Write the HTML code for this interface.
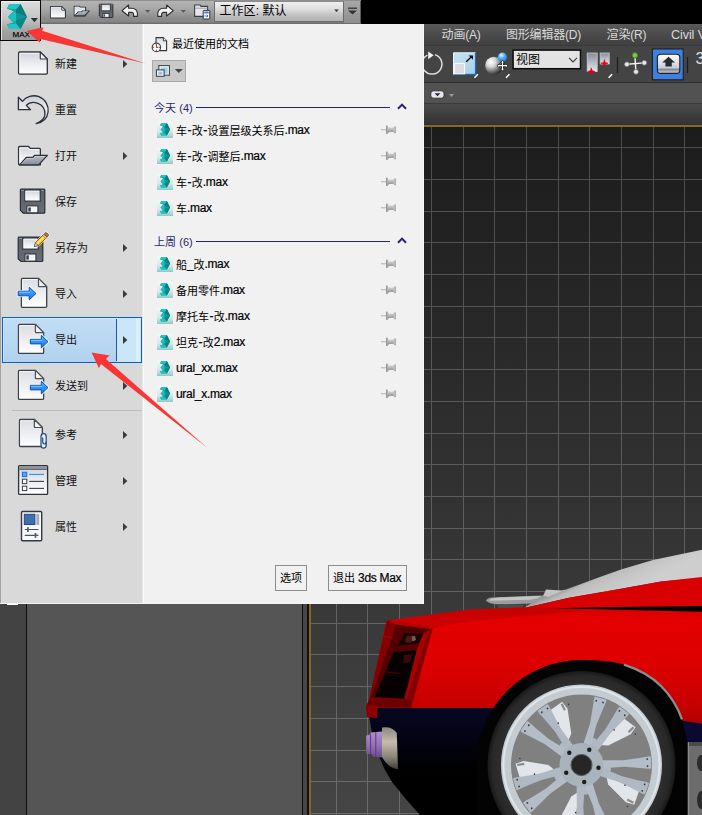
<!DOCTYPE html>
<html lang="zh"><head><meta charset="utf-8"><title>3ds Max</title>
<style>
html,body{margin:0;padding:0}
html{overflow:hidden;width:702px;height:815px;background:#555}
body{width:702px;height:815px;overflow:hidden;position:relative;background:#555;
 font-family:"Liberation Sans","Noto Sans CJK SC",sans-serif;font-size:11px;color:#000}
div,svg{box-sizing:border-box}
.a{position:absolute}
.t{position:absolute;white-space:nowrap}
.l{font-size:12px;letter-spacing:-0.3px;position:relative;top:-0.8px;-webkit-text-stroke:.2px currentColor}
.h{margin:0 .55px}
#root{position:absolute;left:0;top:0;width:702px;height:815px;overflow:hidden}

</style></head><body>
<svg width="0" height="0" style="position:absolute"><defs>
<linearGradient id="gpage" x1="0" y1="0" x2="0" y2="1"><stop offset="0" stop-color="#cfd3db"/><stop offset=".55" stop-color="#eceef1"/><stop offset="1" stop-color="#ffffff"/></linearGradient>
<linearGradient id="gpage2" x1="0" y1="0" x2="0" y2="1"><stop offset="0" stop-color="#d9dce2"/><stop offset=".6" stop-color="#f0f1f4"/><stop offset="1" stop-color="#ffffff"/></linearGradient>
<linearGradient id="gblue" x1="0" y1="0" x2="0" y2="1"><stop offset="0" stop-color="#58b4ff"/><stop offset=".5" stop-color="#2f94fb"/><stop offset="1" stop-color="#1672e6"/></linearGradient>
<linearGradient id="gflap" x1="0" y1="0" x2="0" y2="1"><stop offset="0" stop-color="#b9bec6"/><stop offset="1" stop-color="#868e97"/></linearGradient>
<linearGradient id="gfl" x1="0" y1="0" x2="0" y2="1"><stop offset="0" stop-color="#5a5f68"/><stop offset="1" stop-color="#676c75"/></linearGradient>
<linearGradient id="garrow" x1="0" y1="0" x2="0" y2="1"><stop offset="0" stop-color="#c9cdd6"/><stop offset=".5" stop-color="#eef0f3"/><stop offset="1" stop-color="#d4d8df"/></linearGradient>
<linearGradient id="gmaxbg" x1="0" y1="0" x2="0" y2="1"><stop offset="0" stop-color="#f4f8f8"/><stop offset=".6" stop-color="#d6e8e8"/><stop offset="1" stop-color="#8ecaca"/></linearGradient>
<linearGradient id="gpin" x1="0" y1="0" x2="0" y2="1"><stop offset="0" stop-color="#e6e6e6"/><stop offset=".5" stop-color="#b4b4b4"/><stop offset="1" stop-color="#8e8e8e"/></linearGradient>
<g id="logo3">
 <path d="M9.2 4H20.55L26.9 16.75L20.55 28.9H9.2L7 24.5L13.2 22.7L8 16.75L13.6 11L7 8.4Z" fill="#0e8f8f"/>
 <path d="M20.55 4L26.9 16.75L16 12.6V9.6Z" fill="#0a7c7e"/>
 <path d="M16 12.6L26.9 16.75L16 20.9Z" fill="#0f9696"/>
 <path d="M16 20.9L26.9 16.75L20.55 28.9L16 23.3Z" fill="#0b8587"/>
 <path d="M9.2 4H20.55L16 9.6L7 8.4Z" fill="#22c6c4"/>
 <path d="M7 8.4L16 9.6V12.6L13.6 11Z" fill="#13a5a5"/>
 <path d="M8 16.75L13.6 11L16 12.6V20.9L13.2 22.7Z" fill="#1cc0be"/>
 <path d="M13.2 22.7L16 20.9V23.3L7 24.5Z" fill="#13a5a5"/>
 <path d="M7 24.5L16 23.3L20.55 28.9H9.2Z" fill="#20c4c2"/>
</g>
<g id="maxfile">
 <rect x="0" y="0" width="16" height="16" fill="url(#gmaxbg)"/>
 <use href="#logo3" transform="translate(-.4 -.9) scale(.5)"/>
</g>
<g id="pin">
 <path d="M0 4.8H5.5" stroke="#b0b0b0" stroke-width="1"/>
 <rect x="5" y=".6" width="1.8" height="8.4" rx=".6" fill="#9a9a9a"/>
 <path d="M6.8 1.4L8.3 2.6H12.8V7H8.3L6.8 8.2Z" fill="url(#gpin)"/>
 <rect x="12.8" y="1.4" width="2.2" height="6.9" rx=".6" fill="#a2a2a2"/>
 <rect x="13.4" y="2" width=".9" height="5.7" fill="#d0d0d0"/>
</g>
</defs></svg>
<div id="root">
<div class="a" style="left:0;top:0;width:702px;height:24px;background:#000"></div>
<div class="a" style="left:0;top:0;width:361px;height:24px;background:linear-gradient(#6a6a6a 0,#b4b4b4 1px,#a6a6a6 40%,#8c8c8c 75%,#868686 22px,#6e6e6e 23px)"></div>
<div class="a" style="left:0;top:24px;width:702px;height:21px;background:linear-gradient(#5a5a5a,#484848 60%,#404040)"></div>
<div class="t" aria-label="&#21160;&#30011;(A)" style="left:441.6px;top:28.0px;height:14px;line-height:14px;font-size:12px;color:#dadada;letter-spacing:-.2px">动画(A)</div>
<div class="t" aria-label="&#22270;&#24418;&#32534;&#36753;&#22120;(D)" style="left:506px;top:28.0px;height:14px;line-height:14px;font-size:12px;color:#dadada;letter-spacing:-.2px">图形编辑器(D)</div>
<div class="t" aria-label="&#28210;&#26579;(R)" style="left:606.6px;top:28.0px;height:14px;line-height:14px;font-size:12px;color:#dadada;letter-spacing:-.2px">渲染(R)</div>
<div class="t" aria-label="Civil View" style="left:671px;top:28.0px;height:14px;line-height:14px;font-size:12.6px;color:#dadada;letter-spacing:-.1px">Civil View</div>
<div class="a" style="left:0;top:45px;width:702px;height:38px;background:#444;border-top:1px solid #3a3a3a"></div>
<div class="a" style="left:0;top:82px;width:702px;height:1px;background:#2e2e2e"></div>
<div class="a" style="left:0;top:83px;width:702px;height:21px;background:#525252"></div>
<div class="a" style="left:0;top:103px;width:702px;height:1px;background:#3a3a3a"></div>
<div class="a" style="left:0;top:104px;width:702px;height:21px;background:linear-gradient(#4b4b4b,#3c3c3c 60%,#323232)"></div>
<div class="a" style="left:311px;top:127px;width:391px;height:688px;background:linear-gradient(#1c1c1c,#454545)"></div>
<svg class="a" style="left:0;top:0" width="702" height="815"><path d="M336.5 127V815M367.5 127V815M399.5 127V815M431.5 127V815M463.5 127V815M494.5 127V815M526.5 127V815M558.5 127V815M589.5 127V815M621.5 127V815M653.5 127V815M684.5 127V815M311 147.5H702M311 179.5H702M311 211.5H702M311 242.5H702M311 274.5H702M311 306.5H702M311 337.5H702M311 369.5H702M311 401.5H702M311 433.5H702M311 464.5H702M311 496.5H702M311 528.5H702M311 559.5H702M311 591.5H702M311 623.5H702M311 654.5H702M311 686.5H702M311 718.5H702M311 750.5H702M311 781.5H702M311 813.5H702" stroke="#fff" stroke-opacity=".21" stroke-width="1" fill="none" shape-rendering="crispEdges"/></svg>
<div class="a" style="left:309px;top:125px;width:393px;height:2px;background:#86691f"></div>
<div class="a" style="left:309px;top:125px;width:2px;height:690px;background:#86691f"></div>
<div class="a" style="left:0;top:125px;width:27px;height:690px;background:#434343"></div>
<div class="a" style="left:26px;top:125px;width:1px;height:690px;background:#0c0c0c"></div>
<div class="a" style="left:27px;top:125px;width:275px;height:690px;background:#555"></div>
<div class="a" style="left:302px;top:125px;width:1px;height:690px;background:#0c0c0c"></div>
<div class="a" style="left:303px;top:125px;width:4px;height:690px;background:#474747"></div>
<div class="a" style="left:307px;top:125px;width:2px;height:690px;background:#111"></div>
<div class="a" style="left:7px;top:603px;width:11px;height:2px;background:#fff"></div><svg class="a" style="left:0;top:0" width="702" height="110"><path d="M427.4 55.2A10 10 0 1 0 435 54.6" fill="none" stroke="#dcdcdc" stroke-width="1.5"/><path d="M428.2 51.6L433.6 55.2L428.2 59.2Z" fill="#f2f2f2"/><defs><linearGradient id="gsc" x1="0" y1="0" x2="1" y2="1"><stop offset="0" stop-color="#c6e4f2"/><stop offset="1" stop-color="#a4d0e8"/></linearGradient><radialGradient id="gsph" cx=".33" cy=".3" r=".75"><stop offset="0" stop-color="#fff"/><stop offset=".35" stop-color="#d8d8d8"/><stop offset=".75" stop-color="#6a6a6a"/><stop offset="1" stop-color="#2c2c2c"/></radialGradient><radialGradient id="gsb" cx=".4" cy=".3" r=".7"><stop offset="0" stop-color="#eaf6ff"/><stop offset=".45" stop-color="#56b4f8"/><stop offset="1" stop-color="#1a7be0"/></radialGradient><linearGradient id="gbar" x1="0" y1="0" x2="0" y2="1"><stop offset="0" stop-color="#878d98"/><stop offset="1" stop-color="#e6e9ee"/></linearGradient><linearGradient id="gkey" x1="0" y1="0" x2="0" y2="1"><stop offset="0" stop-color="#ffffff"/><stop offset="1" stop-color="#d4d8df"/></linearGradient><linearGradient id="gkey2" x1="0" y1="0" x2="0" y2="1"><stop offset="0" stop-color="#fff"/><stop offset=".72" stop-color="#c8ccd4"/><stop offset=".78" stop-color="#7e848e"/><stop offset="1" stop-color="#d4d8de"/></linearGradient></defs><rect x="453.5" y="52.8" width="22" height="21.6" fill="url(#gsc)"/><path d="M453.5 74.4V52.8H475.5" stroke="#eaf6fc" stroke-width="1" fill="none"/><path d="M454 74.4H475.5V53" stroke="#2468c0" stroke-width="1.2" fill="none"/><rect x="454.4" y="63.4" width="10.2" height="10.4" fill="#dcdde2" stroke="#fafafa" stroke-width="1"/><path d="M466.2 61.8L472.2 56.1" stroke="#111" stroke-width="1.4"/><path d="M468.6 55.4H473V59.8Z" fill="#111"/><path d="M474.4 77.8L477.9 74.3M506 77.8L509.5 74.3M608.6 77.8L612.1 74.3" stroke="#fff" stroke-width="1.5"/><circle cx="494" cy="65.6" r="8.9" fill="url(#gsph)"/><circle cx="502.4" cy="57.2" r="4.6" fill="url(#gsb)"/><path d="M502.5 61V70.4M497.8 65.7H507.2" stroke="#111" stroke-width="2.6"/><path d="M502.5 60.2L504.6 62.8H500.4ZM502.5 71.2L504.6 68.6H500.4ZM497 65.7L499.6 63.6V67.8ZM508 65.7L505.4 63.6V67.8Z" fill="#fff" stroke="#111" stroke-width=".7"/><path d="M502.5 61.4V70M498.2 65.7H506.8" stroke="#fff" stroke-width="1.2"/><rect x="513.1" y="50.1" width="67.4" height="18.6" fill="#e3e3e3" stroke="#0c0c0c" stroke-width="1.5"/><path d="M569 57.8L573 61.8L577 57.8" stroke="#3c3c3c" stroke-width="1.2" fill="none"/><rect x="587.2" y="53" width="10" height="18.6" fill="url(#gbar)" stroke="#c9ccd2" stroke-width=".8"/><rect x="600.2" y="53" width="9" height="11" fill="url(#gbar)" stroke="#c9ccd2" stroke-width=".8"/><path d="M591.3 67.80000000000001L592.0999999999999 70.60000000000001L594.9 71.4L592.0999999999999 72.2L591.3 75.0L590.5 72.2L587.6999999999999 71.4L590.5 70.60000000000001Z" fill="#e40012" stroke="#e40012" stroke-width=".6"/><path d="M604.4 59.6L605.1999999999999 62.400000000000006L608.0 63.2L605.1999999999999 64.0L604.4 66.8L603.6 64.0L600.8 63.2L603.6 62.400000000000006Z" fill="#e40012" stroke="#e40012" stroke-width=".6"/><path d="M617.5 57V73M687.5 57V73" stroke="#1c1c1c" stroke-width="1.2"/><path d="M627 64.2L644.2 62.9M634.9 55.4L635.9 71.8" stroke="#f2f2f2" stroke-width="1.4"/><circle cx="626.9" cy="64.3" r="2.4" fill="#e8e8ec" stroke="#7c7c84" stroke-width=".8"/><circle cx="644.3" cy="62.8" r="2.4" fill="#e8e8ec" stroke="#7c7c84" stroke-width=".8"/><circle cx="636" cy="71.8" r="2.4" fill="#e8e8ec" stroke="#7c7c84" stroke-width=".8"/><circle cx="634.9" cy="55.3" r="2.7" fill="#7cc84a" stroke="#3c7c24" stroke-width=".9"/><rect x="652.4" y="49" width="30.8" height="30.8" fill="#3e80e2" stroke="#1a1a1a" stroke-width="1"/><rect x="657.4" y="54.2" width="22.4" height="19.2" rx="3.2" fill="url(#gkey2)" stroke="#1c1f26" stroke-width="1.1"/><path d="M668.6 56.8L675 62.4H671.8V66.4H665.4V62.4H662.2Z" fill="#262a33"/><rect x="430.8" y="90.8" width="13.2" height="7.4" rx="2.6" fill="#e6e6ee" stroke="#2a2a2a" stroke-width=".9"/><path d="M434.6 93.2H440.4L437.5 96.2Z" fill="#22262e"/><path d="M449 94H454L451.5 96.9Z" fill="#9a9a9a"/></svg><div class="t" aria-label="&#35270;&#22270;" style="left:516px;top:53.2px;height:14px;line-height:14px;font-size:12px;color:#000;">视图</div>
<div class="t" style="left:695.4px;top:49.6px;font-size:16px;line-height:18px;color:#dcdcdc">3</div><svg class="a" style="left:0;top:0" width="702" height="815"><defs>
<clipPath id="vp"><rect x="311" y="127" width="391" height="688"/></clipPath>
<linearGradient id="gbody" gradientUnits="userSpaceOnUse" x1="0" y1="606" x2="0" y2="724"><stop offset="0" stop-color="#d60000"/><stop offset=".12" stop-color="#e40000"/><stop offset=".5" stop-color="#dc0000"/><stop offset=".85" stop-color="#c60000"/><stop offset="1" stop-color="#b40000"/></linearGradient>
<linearGradient id="grear" gradientUnits="userSpaceOnUse" x1="400" y1="0" x2="500" y2="0"><stop offset="0" stop-color="#000" stop-opacity=".22"/><stop offset="1" stop-color="#000" stop-opacity="0"/></linearGradient>
<linearGradient id="gnavy" gradientUnits="userSpaceOnUse" x1="0" y1="708" x2="0" y2="775"><stop offset="0" stop-color="#070724"/><stop offset=".5" stop-color="#030312"/><stop offset=".8" stop-color="#010106"/><stop offset="1" stop-color="#000"/></linearGradient>
<linearGradient id="ghood" gradientUnits="userSpaceOnUse" x1="600" y1="570" x2="612" y2="596"><stop offset="0" stop-color="#909090"/><stop offset=".25" stop-color="#bcbcbc"/><stop offset=".6" stop-color="#c6c6c6"/><stop offset="1" stop-color="#cecece"/></linearGradient>
<linearGradient id="gcone" gradientUnits="userSpaceOnUse" x1="0" y1="727" x2="0" y2="770"><stop offset="0" stop-color="#8c867c"/><stop offset=".35" stop-color="#c4bcae"/><stop offset=".7" stop-color="#8a847a"/><stop offset="1" stop-color="#3a3632"/></linearGradient>
<linearGradient id="gpurp" gradientUnits="userSpaceOnUse" x1="0" y1="732" x2="0" y2="758"><stop offset="0" stop-color="#ad8fcc"/><stop offset=".5" stop-color="#9672b4"/><stop offset="1" stop-color="#664a86"/></linearGradient>
<radialGradient id="gtire" gradientUnits="userSpaceOnUse" cx="581.5" cy="765" r="94"><stop offset=".85" stop-color="#2e2e2e"/><stop offset=".95" stop-color="#282828"/><stop offset="1" stop-color="#181818"/></radialGradient>
</defs><g clip-path="url(#vp)"><path d="M524 608L541 596L566 589.6L602 576.3L621 569.4L653 560L702 549.8V578L661 581.6L621 588.7L569 597.8Z" fill="url(#ghood)"/><path d="M543 596L546 589.4L562 590.4L566 589.6L548 597Z" fill="#c4c4c4"/><path d="M486 600.6Q487 597.8 492 597.4L541 595.6L548 597L530 603.6L500 604.6Q488 604 486 600.6Z" fill="#9c9c9c"/><path d="M489 600.8L530 599.8L538 598L541 596L500 597.6Q490 598.2 489 600.8Z" fill="#c6c6c6"/><path d="M497 604.2H524L521 609.6H499Z" fill="#4c4c4c"/><path d="M520 610L524 608L569 597.8L621 588.7L661 581.6L702 577V610Z" fill="#d80000"/><path d="M386.5 620.4L470 609.4L524 607.4L702 607V723.8L681 720.5L500 730L493 708.4H366L369.8 698.2Z" fill="url(#gbody)"/><path d="M470 609.4L524 607.4L600 608.4L560 612.4L470 621.5L431 628.2L386.5 620.4Z" fill="#b80000" fill-opacity=".55"/><path d="M552 608.2L600 607.3L702 606V611.8L650 610.4L600 609.3Z" fill="#050000"/><path d="M366 708L500 708V815H420L406.6 800L392 782L384.5 769L374 745L369.8 720Z" fill="url(#gnavy)"/><path d="M681 720.5L702 723.8V742H687Z" fill="#0a0a30"/><rect x="687.6" y="742" width="15" height="73" fill="#6c6c6c"/><rect x="687.6" y="742" width="1.6" height="73" fill="#8a8a8a"/><ellipse cx="701" cy="763" rx="4" ry="8" fill="#2c2c2c"/><ellipse cx="701" cy="800" rx="4" ry="9" fill="#2c2c2c"/><path d="M689 742H702V746H689Z" fill="#4a4a4a"/><path d="M387 620L432.9 627.5L411.3 707.6L366 707.6L369.4 697.7Z" fill="#820000"/><path d="M387 620L432.9 627.5L430.2 629.4L396.4 624.8Z" fill="#bc0000"/><path d="M396.4 624.8L430.2 628.9L406.6 699.1L370.8 697.7Z" fill="#520000"/><path d="M404.5 632.9L423.4 633.6L419.4 643.1L397.8 645.8Z" fill="#1c0303"/><path d="M406.5 636.5L413 635.4L415.5 639L409.5 643L405 642Z" fill="#4a1818"/><path d="M411.6 636.6L415 636L416 640L412.4 641.4Z" fill="#7a5a5a"/><path d="M393.7 651.8L416.7 650.5L404.5 698.4L374.8 697Z" fill="#070000"/><path d="M404 655L412 654L410 662L403 663.5Z" fill="#3a0a0a"/><path d="M382.6 671.4L400.6 673.6" stroke="#4a0000" stroke-width="1.2"/><path d="M423.4 633.6L430.2 628.9L406.6 699.1L404.5 698.4L416.7 650.5L419.4 643.1Z" fill="#a60000"/><path d="M381.6 635.4L392.4 636.8L392.2 638.4L383 637.2Z" fill="#a00000"/><path d="M369.4 699L411.8 700.6L411.3 707.6H366Z" fill="#6c0000"/><path d="M366 705L378 706L377 718L367 717Z" fill="#8e0000"/><path d="M382 727.6Q392 726 396.8 733L398 769.3Q388 768 382 757Z" fill="url(#gcone)"/><path d="M366.2 735.6L370.6 734.6V732.6L382 731.4V757.6L372.6 756.6V754.6L366.2 753.4Z" fill="url(#gpurp)"/><path d="M370.6 734.6V754.6M375.8 732V757" stroke="#5a3a80" stroke-width="1" fill="none"/><path d="M476.5 815V765A105 105 0 0 1 581.5 660C600 660 615 661.6 624 664.7C640 670 652 677 661 686C672 697 678 708 682 719.4L687.6 742V815Z" fill="#030303"/><path d="M624 664.7C640 670 652 677 661 686C672 697 678 708 682 719.4" stroke="#8c8c8c" stroke-width="2.3" fill="none"/><circle cx="581.5" cy="765.0" r="94" fill="url(#gtire)"/><circle cx="581.5" cy="765.0" r="80.5" fill="#c4ccd2"/><circle cx="581.5" cy="765.0" r="78" fill="none" stroke="#dfe5e9" stroke-width="2"/><circle cx="581.5" cy="765.0" r="70.5" fill="#808080"/><g transform="translate(581.5 765.0)"><g transform="rotate(-63)"><path d="M26.1 7.0L60.9 16.3L58.3 31.0L49.7 29.9L29.4 15.0Z" fill="#e2e6ea"/><path d="M50.8 25.9L57.5 28.1L57.0 30.3L50.2 28.1Z" fill="#8a8a8a"/><path d="M0 0L27.2 -6.8L30 0L27.2 6.8Z" fill="#b0b8c4"/><path transform="rotate(-11)" d="M18 -4.2L42 -3.2L58 -5L67 -6.2L69.6 -6L69.6 6L67 6.2L58 5L42 3.2L18 4.2Z" fill="#b4bcc8"/><path transform="rotate(11)" d="M18 -4.2L42 -3.2L58 -5L67 -6.2L69.6 -6L69.6 6L67 6.2L58 5L42 3.2L18 4.2Z" fill="#b0b8c4"/><g fill="#3a3a3a"><circle cx="64.0" cy="-16.0" r=".9"/><circle cx="65.4" cy="-9.2" r=".9"/><circle cx="64.0" cy="16.0" r=".9"/><circle cx="65.4" cy="9.2" r=".9"/><circle cx="46.1" cy="13.2" r=".8"/><circle cx="52.0" cy="33.8" r=".8"/></g></g><g transform="rotate(9)"><path d="M26.1 7.0L60.9 16.3L58.3 31.0L49.7 29.9L29.4 15.0Z" fill="#e2e6ea"/><path d="M50.8 25.9L57.5 28.1L57.0 30.3L50.2 28.1Z" fill="#8a8a8a"/><path d="M0 0L27.2 -6.8L30 0L27.2 6.8Z" fill="#b0b8c4"/><path transform="rotate(-11)" d="M18 -4.2L42 -3.2L58 -5L67 -6.2L69.6 -6L69.6 6L67 6.2L58 5L42 3.2L18 4.2Z" fill="#b4bcc8"/><path transform="rotate(11)" d="M18 -4.2L42 -3.2L58 -5L67 -6.2L69.6 -6L69.6 6L67 6.2L58 5L42 3.2L18 4.2Z" fill="#b0b8c4"/><g fill="#3a3a3a"><circle cx="64.0" cy="-16.0" r=".9"/><circle cx="65.4" cy="-9.2" r=".9"/><circle cx="64.0" cy="16.0" r=".9"/><circle cx="65.4" cy="9.2" r=".9"/><circle cx="46.1" cy="13.2" r=".8"/><circle cx="52.0" cy="33.8" r=".8"/></g></g><g transform="rotate(81)"><path d="M26.1 7.0L60.9 16.3L58.3 31.0L49.7 29.9L29.4 15.0Z" fill="#e2e6ea"/><path d="M50.8 25.9L57.5 28.1L57.0 30.3L50.2 28.1Z" fill="#8a8a8a"/><path d="M0 0L27.2 -6.8L30 0L27.2 6.8Z" fill="#b0b8c4"/><path transform="rotate(-11)" d="M18 -4.2L42 -3.2L58 -5L67 -6.2L69.6 -6L69.6 6L67 6.2L58 5L42 3.2L18 4.2Z" fill="#b4bcc8"/><path transform="rotate(11)" d="M18 -4.2L42 -3.2L58 -5L67 -6.2L69.6 -6L69.6 6L67 6.2L58 5L42 3.2L18 4.2Z" fill="#b0b8c4"/><g fill="#3a3a3a"><circle cx="64.0" cy="-16.0" r=".9"/><circle cx="65.4" cy="-9.2" r=".9"/><circle cx="64.0" cy="16.0" r=".9"/><circle cx="65.4" cy="9.2" r=".9"/><circle cx="46.1" cy="13.2" r=".8"/><circle cx="52.0" cy="33.8" r=".8"/></g></g><g transform="rotate(153)"><path d="M26.1 7.0L60.9 16.3L58.3 31.0L49.7 29.9L29.4 15.0Z" fill="#e2e6ea"/><path d="M50.8 25.9L57.5 28.1L57.0 30.3L50.2 28.1Z" fill="#8a8a8a"/><path d="M0 0L27.2 -6.8L30 0L27.2 6.8Z" fill="#b0b8c4"/><path transform="rotate(-11)" d="M18 -4.2L42 -3.2L58 -5L67 -6.2L69.6 -6L69.6 6L67 6.2L58 5L42 3.2L18 4.2Z" fill="#b4bcc8"/><path transform="rotate(11)" d="M18 -4.2L42 -3.2L58 -5L67 -6.2L69.6 -6L69.6 6L67 6.2L58 5L42 3.2L18 4.2Z" fill="#b0b8c4"/><g fill="#3a3a3a"><circle cx="64.0" cy="-16.0" r=".9"/><circle cx="65.4" cy="-9.2" r=".9"/><circle cx="64.0" cy="16.0" r=".9"/><circle cx="65.4" cy="9.2" r=".9"/><circle cx="46.1" cy="13.2" r=".8"/><circle cx="52.0" cy="33.8" r=".8"/></g></g><g transform="rotate(225)"><path d="M26.1 7.0L60.9 16.3L58.3 31.0L49.7 29.9L29.4 15.0Z" fill="#e2e6ea"/><path d="M50.8 25.9L57.5 28.1L57.0 30.3L50.2 28.1Z" fill="#8a8a8a"/><path d="M0 0L27.2 -6.8L30 0L27.2 6.8Z" fill="#b0b8c4"/><path transform="rotate(-11)" d="M18 -4.2L42 -3.2L58 -5L67 -6.2L69.6 -6L69.6 6L67 6.2L58 5L42 3.2L18 4.2Z" fill="#b4bcc8"/><path transform="rotate(11)" d="M18 -4.2L42 -3.2L58 -5L67 -6.2L69.6 -6L69.6 6L67 6.2L58 5L42 3.2L18 4.2Z" fill="#b0b8c4"/><g fill="#3a3a3a"><circle cx="64.0" cy="-16.0" r=".9"/><circle cx="65.4" cy="-9.2" r=".9"/><circle cx="64.0" cy="16.0" r=".9"/><circle cx="65.4" cy="9.2" r=".9"/><circle cx="46.1" cy="13.2" r=".8"/><circle cx="52.0" cy="33.8" r=".8"/></g></g><circle r="22" fill="#aab2bc"/><circle cx="7.8" cy="-15.3" r="2.2" fill="#1c1c1c"/><circle cx="17.0" cy="2.7" r="2.2" fill="#1c1c1c"/><circle cx="2.7" cy="17.0" r="2.2" fill="#1c1c1c"/><circle cx="-15.3" cy="7.8" r="2.2" fill="#1c1c1c"/><circle cx="-12.2" cy="-12.2" r="2.2" fill="#1c1c1c"/><circle r="10.4" fill="#262626"/><circle r="10.6" fill="none" stroke="#5a5a5a" stroke-width="1"/></g></g></svg><div class="a" style="left:0;top:24px;width:424px;height:580px;background:#f1f1f1;border-right:1px solid #fbfbfb;border-bottom:1px solid #f4f4f4"></div>
<div class="a" style="left:0;top:24px;width:142px;height:579px;background:#d9d9d9;border-left:1px solid #a2a2a2"></div>
<div class="a" style="left:142px;top:24px;width:1px;height:579px;background:#e6e6e6"></div>
<div class="a" style="left:143px;top:24px;width:1px;height:579px;background:#fafafa"></div>
<div class="a" style="left:2px;top:317px;width:140px;height:46px;border:1px solid #0a5fc6;background:linear-gradient(#c2ddf5,#b1d2ef);box-shadow:inset 1px 1px 0 #d6e9f9"></div>
<div class="a" style="left:116px;top:319px;width:1px;height:42px;background:#1a58a8"></div>
<div class="a" style="left:117px;top:318px;width:24px;height:44px;background:linear-gradient(90deg,#cbe6f7 0,#cbe6f7 19px,#dcf0fb 19px,#dcf0fb 23px,#cbe6f7 23px)"></div>
<div class="t" aria-label="&#26032;&#24314;" style="left:55px;top:57.3px;height:14px;line-height:14px;font-size:11px;color:#111;">新建</div>
<svg class="a" style="left:123px;top:60px" width="5" height="8"><path d="M0 0L4.3 4L0 8Z" fill="#3a3a3a"/></svg>
<div class="t" aria-label="&#37325;&#32622;" style="left:55px;top:103.3px;height:14px;line-height:14px;font-size:11px;color:#111;">重置</div>
<div class="t" aria-label="&#25171;&#24320;" style="left:55px;top:149.3px;height:14px;line-height:14px;font-size:11px;color:#111;">打开</div>
<svg class="a" style="left:123px;top:152px" width="5" height="8"><path d="M0 0L4.3 4L0 8Z" fill="#3a3a3a"/></svg>
<div class="t" aria-label="&#20445;&#23384;" style="left:55px;top:195.3px;height:14px;line-height:14px;font-size:11px;color:#111;">保存</div>
<div class="t" aria-label="&#21478;&#23384;&#20026;" style="left:55px;top:241.3px;height:14px;line-height:14px;font-size:11px;color:#111;">另存为</div>
<svg class="a" style="left:123px;top:244px" width="5" height="8"><path d="M0 0L4.3 4L0 8Z" fill="#3a3a3a"/></svg>
<div class="t" aria-label="&#23548;&#20837;" style="left:55px;top:287.3px;height:14px;line-height:14px;font-size:11px;color:#111;">导入</div>
<svg class="a" style="left:123px;top:290px" width="5" height="8"><path d="M0 0L4.3 4L0 8Z" fill="#3a3a3a"/></svg>
<div class="t" aria-label="&#23548;&#20986;" style="left:55px;top:333.3px;height:14px;line-height:14px;font-size:11px;color:#111;">导出</div>
<svg class="a" style="left:123px;top:336px" width="5" height="8"><path d="M0 0L4.3 4L0 8Z" fill="#3a3a3a"/></svg>
<div class="t" aria-label="&#21457;&#36865;&#21040;" style="left:55px;top:379.3px;height:14px;line-height:14px;font-size:11px;color:#111;">发送到</div>
<svg class="a" style="left:123px;top:382px" width="5" height="8"><path d="M0 0L4.3 4L0 8Z" fill="#3a3a3a"/></svg>
<div class="t" aria-label="&#21442;&#32771;" style="left:55px;top:428.3px;height:14px;line-height:14px;font-size:11px;color:#111;">参考</div>
<svg class="a" style="left:123px;top:431px" width="5" height="8"><path d="M0 0L4.3 4L0 8Z" fill="#3a3a3a"/></svg>
<div class="t" aria-label="&#31649;&#29702;" style="left:55px;top:474.3px;height:14px;line-height:14px;font-size:11px;color:#111;">管理</div>
<svg class="a" style="left:123px;top:477px" width="5" height="8"><path d="M0 0L4.3 4L0 8Z" fill="#3a3a3a"/></svg>
<div class="t" aria-label="&#23646;&#24615;" style="left:55px;top:520.3px;height:14px;line-height:14px;font-size:11px;color:#111;">属性</div>
<svg class="a" style="left:123px;top:523px" width="5" height="8"><path d="M0 0L4.3 4L0 8Z" fill="#3a3a3a"/></svg>
<div class="a" style="left:12px;top:410px;width:130px;height:1px;background:#bdbdbd"></div>
<div class="t" aria-label="&#26368;&#36817;&#20351;&#29992;&#30340;&#25991;&#26723;" style="left:172px;top:37.0px;height:14px;line-height:14px;font-size:11px;color:#000;">最近使用的文档</div>
<div class="a" style="left:152px;top:60px;width:34px;height:22px;background:#c9c9c9;border:1px solid #a9a9a9"></div>
<svg class="a" style="left:0;top:0" width="702" height="815"><path d="M156 37.6H163.4L166.6 40.8V50.6H156Z" fill="url(#gpage2)" stroke="#30343c" stroke-width="1.1" stroke-linejoin="round"/><path d="M163.4 37.6V40.8H166.6" fill="#f6f6f8" stroke="#30343c" stroke-width=".9" stroke-linejoin="round"/><circle cx="156.4" cy="47.4" r="4.2" fill="#fbfbfd" stroke="#42464e" stroke-width="1.2"/><path d="M156.4 43.9V45M156.4 49.8V50.9M152.9 47.4H154M158.8 47.4H159.9" stroke="#f03a20" stroke-width="1.1"/><path d="M156.4 45V47.4H158.2" stroke="#30343c" stroke-width=".9" fill="none"/><rect x="158.8" y="65.6" width="10.6" height="9.6" fill="#fff" stroke="#444" stroke-width="1.1"/><rect x="160.6" y="67.3" width="7.2" height="6.4" fill="#9fd2f2"/><rect x="156.5" y="69.9" width="7.6" height="6.4" fill="#fff" stroke="#444" stroke-width="1.1"/><rect x="158.2" y="71.5" width="4.3" height="3.3" fill="#8ccaf0"/><path d="M174.8 69.1H182.8L178.8 73.1Z" fill="#444"/></svg>
<div class="t" aria-label="&#20170;&#22825; (4)" style="left:154px;top:100.6px;height:14px;line-height:14px;font-size:11px;color:#282672;letter-spacing:.05px">今天 (4)</div>
<div class="a" style="left:196px;top:107px;width:194px;height:1px;background:#282672"></div>
<svg class="a" style="left:396px;top:103.4px" width="12" height="8"><path d="M2 5.8L6 1.6L10 5.8" stroke="#282672" stroke-width="2" fill="none"/></svg>
<div class="t" aria-label="&#19978;&#21608; (6)" style="left:154px;top:234.7px;height:14px;line-height:14px;font-size:11px;color:#282672;letter-spacing:.05px">上周 (6)</div>
<div class="a" style="left:196px;top:241px;width:194px;height:1px;background:#282672"></div>
<svg class="a" style="left:396px;top:237.4px" width="12" height="8"><path d="M2 5.8L6 1.6L10 5.8" stroke="#282672" stroke-width="2" fill="none"/></svg>
<div class="t" aria-label="&#36710;-&#25913;-&#35774;&#32622;&#23618;&#32423;&#20851;&#31995;&#21518;.max" style="left:176px;top:123.6px;height:14px;line-height:14px;font-size:11px;color:#000">车<span class="l"><span class="h">-</span></span>改<span class="l"><span class="h">-</span></span>设置层级关系后<span class="l">.max</span></div>
<svg class="a" style="left:157px;top:122px" width="16" height="16"><use href="#maxfile"/></svg>
<svg class="a" style="left:381px;top:124.8px" width="16" height="11"><use href="#pin"/></svg>
<div class="t" aria-label="&#36710;-&#25913;-&#35843;&#25972;&#21518;.max" style="left:176px;top:149.6px;height:14px;line-height:14px;font-size:11px;color:#000">车<span class="l"><span class="h">-</span></span>改<span class="l"><span class="h">-</span></span>调整后<span class="l">.max</span></div>
<svg class="a" style="left:157px;top:148px" width="16" height="16"><use href="#maxfile"/></svg>
<svg class="a" style="left:381px;top:150.8px" width="16" height="11"><use href="#pin"/></svg>
<div class="t" aria-label="&#36710;-&#25913;.max" style="left:176px;top:175.6px;height:14px;line-height:14px;font-size:11px;color:#000">车<span class="l"><span class="h">-</span></span>改<span class="l">.max</span></div>
<svg class="a" style="left:157px;top:174px" width="16" height="16"><use href="#maxfile"/></svg>
<svg class="a" style="left:381px;top:176.8px" width="16" height="11"><use href="#pin"/></svg>
<div class="t" aria-label="&#36710;.max" style="left:176px;top:201.6px;height:14px;line-height:14px;font-size:11px;color:#000">车<span class="l">.max</span></div>
<svg class="a" style="left:157px;top:200px" width="16" height="16"><use href="#maxfile"/></svg>
<svg class="a" style="left:381px;top:202.8px" width="16" height="11"><use href="#pin"/></svg>
<div class="t" aria-label="&#33337;_&#25913;.max" style="left:176px;top:257.6px;height:14px;line-height:14px;font-size:11px;color:#000">船<span class="l">_</span>改<span class="l">.max</span></div>
<svg class="a" style="left:157px;top:256px" width="16" height="16"><use href="#maxfile"/></svg>
<svg class="a" style="left:381px;top:258.8px" width="16" height="11"><use href="#pin"/></svg>
<div class="t" aria-label="&#22791;&#29992;&#38646;&#20214;.max" style="left:176px;top:283.6px;height:14px;line-height:14px;font-size:11px;color:#000">备用零件<span class="l">.max</span></div>
<svg class="a" style="left:157px;top:282px" width="16" height="16"><use href="#maxfile"/></svg>
<svg class="a" style="left:381px;top:284.8px" width="16" height="11"><use href="#pin"/></svg>
<div class="t" aria-label="&#25705;&#25176;&#36710;-&#25913;.max" style="left:176px;top:309.6px;height:14px;line-height:14px;font-size:11px;color:#000">摩托车<span class="l"><span class="h">-</span></span>改<span class="l">.max</span></div>
<svg class="a" style="left:157px;top:308px" width="16" height="16"><use href="#maxfile"/></svg>
<svg class="a" style="left:381px;top:310.8px" width="16" height="11"><use href="#pin"/></svg>
<div class="t" aria-label="&#22374;&#20811;-&#25913;2.max" style="left:176px;top:335.6px;height:14px;line-height:14px;font-size:11px;color:#000">坦克<span class="l"><span class="h">-</span></span>改<span class="l">2.max</span></div>
<svg class="a" style="left:157px;top:334px" width="16" height="16"><use href="#maxfile"/></svg>
<svg class="a" style="left:381px;top:336.8px" width="16" height="11"><use href="#pin"/></svg>
<div class="t" aria-label="ural_xx.max" style="left:176px;top:361.6px;height:14px;line-height:14px;font-size:11px;color:#000"><span class="l">ural_xx.max</span></div>
<svg class="a" style="left:157px;top:360px" width="16" height="16"><use href="#maxfile"/></svg>
<svg class="a" style="left:381px;top:362.8px" width="16" height="11"><use href="#pin"/></svg>
<div class="t" aria-label="ural_x.max" style="left:176px;top:387.6px;height:14px;line-height:14px;font-size:11px;color:#000"><span class="l">ural_x.max</span></div>
<svg class="a" style="left:157px;top:386px" width="16" height="16"><use href="#maxfile"/></svg>
<svg class="a" style="left:381px;top:388.8px" width="16" height="11"><use href="#pin"/></svg>
<div class="a" style="left:275px;top:565px;width:32px;height:26px;border:1px solid #8c8c8c;background:#f1f1f1"></div>
<div class="t" aria-label="&#36873;&#39033;" style="left:280px;top:571.4px;height:14px;line-height:14px;font-size:11px;color:#000;">选项</div>
<div class="a" style="left:328px;top:565px;width:79px;height:26px;border:1px solid #8c8c8c;background:#f1f1f1"></div>
<div class="t" style="left:333px;top:571.4px;height:14px;line-height:14px;font-size:11px;color:#000">退出<span class="l"> 3ds Max</span></div><svg class="a" style="left:0;top:0" width="702" height="815"><path d="M19.6 52H40.3L47.3 59V73Q47.3 74.1 46.2 74.1H19.6Q18.6 74.1 18.6 73V53Q18.6 52 19.6 52Z" fill="url(#gpage)" stroke="#2e323a" stroke-width="1.3" stroke-linejoin="round"/><path d="M19.9 72.8V53.3H39.6" stroke="#fff" stroke-opacity=".85" fill="none"/><path d="M40.3 52V58.4Q40.3 59 40.9 59H47.3Z" fill="#f4f5f7" stroke="#3a3f48" stroke-width="1.2" stroke-linejoin="round"/><path d="M18.4 97.1L22.4 101.3C26 96.6 33 94.4 39 96.7C45.6 99.4 48.9 106 48.1 112C47.2 118.4 42.6 122.6 36.2 123.7C41 121.4 44.4 118.6 44.9 115C45.4 110 43 105.4 38 103.4C33.5 101.6 29 102.6 26.3 105.4L30.5 109.7H18.4Z" fill="url(#garrow)" stroke="#2a2e38" stroke-width="1.3" stroke-linejoin="round"/><path d="M19.5 146.5H28.6L30.2 148.3H39.4Q40.4 148.3 40.4 149.3V164.8H19.5Q18.6 164.8 18.6 163.8V147.5Q18.6 146.5 19.5 146.5Z" fill="url(#gpage)" stroke="#2e323a" stroke-width="1.3" stroke-linejoin="round"/><path d="M19.9 163V147.8H28.1L29.7 149.6H39" stroke="#fff" stroke-opacity=".9" fill="none"/><path d="M19.6 164.9L26.3 157.4H32.9L34.4 155.4H47.4L38.6 164.9Z" fill="url(#gflap)" stroke="#2e323a" stroke-width="1.3" stroke-linejoin="round"/><path d="M21.6 163.9L26.9 158.6H33.5L35 156.6H45.4" stroke="#d4d8de" stroke-opacity=".7" stroke-width=".9" fill="none"/><path d="M21.2 189.2H44.0Q44.8 189.2 44.8 190.0V212.39999999999998Q44.8 213.2 44.0 213.2H23.4L20.4 210.39999999999998V190.0Q20.4 189.2 21.2 189.2Z" fill="url(#gfl)" stroke="#2b2f37" stroke-width="1.2" stroke-linejoin="round"/><path d="M21.299999999999997 190.5H23.9M41.400000000000006 190.5H43.9" stroke="#9a9fa8" stroke-width=".9"/><rect x="24.9" y="190.1" width="15.300000000000004" height="11.000000000000005" fill="url(#gpage)" stroke="#2b2f37" stroke-width="1.1"/><path d="M25.799999999999997 200.2V191.1H39.300000000000004" stroke="#fff" stroke-width=".8" fill="none"/><rect x="26.9" y="205.9" width="11.0" height="6.899999999999983" fill="#f4f5f7" stroke="#2b2f37" stroke-width="1"/><rect x="28.3" y="207.5" width="2.5" height="4.099999999999994" fill="#3d424b"/><path d="M19.0 237.2H42.0Q42.8 237.2 42.8 238.0V260.7Q42.8 261.5 42.0 261.5H21.2L18.2 258.7V238.0Q18.2 237.2 19.0 237.2Z" fill="url(#gfl)" stroke="#2b2f37" stroke-width="1.2" stroke-linejoin="round"/><path d="M19.099999999999998 238.5H21.9M39.400000000000006 238.5H41.9" stroke="#9a9fa8" stroke-width=".9"/><rect x="22.9" y="238.1" width="15.300000000000004" height="11.000000000000005" fill="url(#gpage)" stroke="#2b2f37" stroke-width="1.1"/><path d="M23.799999999999997 248.2V239.1H37.300000000000004" stroke="#fff" stroke-width=".8" fill="none"/><rect x="25" y="254" width="10.899999999999999" height="7.1" fill="#f4f5f7" stroke="#2b2f37" stroke-width="1"/><rect x="26.3" y="255.3" width="2.5" height="4.300000000000011" fill="#3d424b"/><g transform="translate(34.3 246.6) rotate(-44.5)"><path d="M0 0L3.6 -2.1H18.4V2.1H3.6Z" fill="#fff" stroke="#fff" stroke-width="1.8" stroke-opacity=".8" stroke-linejoin="round"/><path d="M0 0L3.6 -2.1V2.1Z" fill="#f8f8f8" stroke="#3a3a3a" stroke-width=".8" stroke-linejoin="round"/><rect x="3.6" y="-2.1" width="10.4" height="4.2" fill="#ffc61a" stroke="#7a4a00" stroke-width=".8"/><rect x="3.6" y="-.9" width="10.4" height="1.5" fill="#ffe680"/><rect x="14" y="-2.1" width="1.6" height="4.2" fill="#e8e8e8" stroke="#6a5a4a" stroke-width=".6"/><rect x="15.6" y="-2.1" width="2.8" height="4.2" rx=".6" fill="#c4702e" stroke="#6a3a10" stroke-width=".8"/></g><path d="M22.4 278.4H38.5L46.7 286.59999999999997V306.3Q46.7 307.3 45.7 307.3H22.4Q21.4 307.3 21.4 306.3V279.4Q21.4 278.4 22.4 278.4Z" fill="url(#gpage2)" stroke="#3a3f48" stroke-width="1.3" stroke-linejoin="round"/><path d="M22.599999999999998 306.1V279.59999999999997H37.9" stroke="#fff" stroke-opacity=".8" stroke-width="1" fill="none"/><path d="M38.5 278.4V285.99999999999994Q38.5 286.59999999999997 39.1 286.59999999999997H46.7Z" fill="#f3f4f6" stroke="#4a505a" stroke-width="1.2" stroke-linejoin="round"/><path d="M18.2 291.2H29.2V287.1L36 293.5L29.2 299.9V295.8H18.2Z" fill="none" stroke="#fff" stroke-opacity=".85" stroke-width="2.6" stroke-linejoin="round"/><path d="M18.2 291.2H29.2V287.1L36 293.5L29.2 299.9V295.8H18.2Z" fill="url(#gblue)" stroke="#0b4fae" stroke-width="1" stroke-linejoin="round"/><path d="M19.0 292.2H30.0" stroke="#9ad4ff" stroke-width=".8"/><path d="M19.5 324.4H35.400000000000006L43.6 332.59999999999997V352.4Q43.6 353.4 42.6 353.4H19.5Q18.5 353.4 18.5 352.4V325.4Q18.5 324.4 19.5 324.4Z" fill="url(#gpage2)" stroke="#3a3f48" stroke-width="1.3" stroke-linejoin="round"/><path d="M19.7 352.2V325.59999999999997H34.800000000000004" stroke="#fff" stroke-opacity=".8" stroke-width="1" fill="none"/><path d="M35.400000000000006 324.4V331.99999999999994Q35.400000000000006 332.59999999999997 36.00000000000001 332.59999999999997H43.6Z" fill="#f3f4f6" stroke="#4a505a" stroke-width="1.2" stroke-linejoin="round"/><path d="M30.3 339.3H41.3V335.20000000000005L48 341.6L41.3 348.0V343.90000000000003H30.3Z" fill="none" stroke="#fff" stroke-opacity=".85" stroke-width="2.6" stroke-linejoin="round"/><path d="M30.3 339.3H41.3V335.20000000000005L48 341.6L41.3 348.0V343.90000000000003H30.3Z" fill="url(#gblue)" stroke="#0b4fae" stroke-width="1" stroke-linejoin="round"/><path d="M31.1 340.3H42.099999999999994" stroke="#9ad4ff" stroke-width=".8"/><path d="M19.5 370.4H35.400000000000006L43.6 378.59999999999997V398.4Q43.6 399.4 42.6 399.4H19.5Q18.5 399.4 18.5 398.4V371.4Q18.5 370.4 19.5 370.4Z" fill="url(#gpage2)" stroke="#3a3f48" stroke-width="1.3" stroke-linejoin="round"/><path d="M19.7 398.2V371.59999999999997H34.800000000000004" stroke="#fff" stroke-opacity=".8" stroke-width="1" fill="none"/><path d="M35.400000000000006 370.4V377.99999999999994Q35.400000000000006 378.59999999999997 36.00000000000001 378.59999999999997H43.6Z" fill="#f3f4f6" stroke="#4a505a" stroke-width="1.2" stroke-linejoin="round"/><path d="M30.3 385.3H41.3V381.20000000000005L48 387.6L41.3 394.0V389.90000000000003H30.3Z" fill="none" stroke="#fff" stroke-opacity=".85" stroke-width="2.6" stroke-linejoin="round"/><path d="M30.3 385.3H41.3V381.20000000000005L48 387.6L41.3 394.0V389.90000000000003H30.3Z" fill="url(#gblue)" stroke="#0b4fae" stroke-width="1" stroke-linejoin="round"/><path d="M31.1 386.3H42.099999999999994" stroke="#9ad4ff" stroke-width=".8"/><path d="M20.5 419.5H34.4L42.4 427.5V445.5Q42.4 446.5 41.4 446.5H20.5Q19.5 446.5 19.5 445.5V420.5Q19.5 419.5 20.5 419.5Z" fill="url(#gpage2)" stroke="#3a3f48" stroke-width="1.3" stroke-linejoin="round"/><path d="M20.7 445.3V420.7H33.8" stroke="#fff" stroke-opacity=".8" stroke-width="1" fill="none"/><path d="M34.4 419.5V426.9Q34.4 427.5 35.0 427.5H42.4Z" fill="#f3f4f6" stroke="#4a505a" stroke-width="1.2" stroke-linejoin="round"/><path d="M41 443.7V436.4Q41 433.6 43.6 433.6Q46.2 433.6 46.2 436.4V445.2Q46.2 448 43.6 448Q41 448 41 445.2Z" fill="#f2f4f8" fill-opacity=".9" stroke="#1d4b89" stroke-width="1.25"/><path d="M42.7 437.4V441.6Q42.7 444 44.6 444Q46.2 444 46.2 441.8" fill="none" stroke="#1d4b89" stroke-width="1.2"/><rect x="18.6" y="465.6" width="29" height="28.8" rx="1" fill="url(#gpage)" stroke="#2e323a" stroke-width="1.3"/><rect x="19.3" y="466.3" width="27.6" height="2.4" fill="#8a8f98"/><path d="M19.3 469.3H46.9" stroke="#3a3f48" stroke-width=".9"/><rect x="22.4" y="472.2" width="4.4" height="4.4" fill="#4da3ff" stroke="#1c72d8" stroke-width="1"/><path d="M29.2 474.4H44" stroke="#2b8cf2" stroke-width="1.1"/><rect x="22.4" y="479.2" width="4.4" height="4.4" fill="#fff" stroke="#3a3f48" stroke-width="1"/><path d="M29.2 481.4H44" stroke="#3a3f48" stroke-width="1.1"/><rect x="22.4" y="486.2" width="4.4" height="4.4" fill="#fff" stroke="#3a3f48" stroke-width="1"/><path d="M29.2 488.4H44" stroke="#3a3f48" stroke-width="1.1"/><rect x="21.5" y="511.5" width="20.2" height="29.2" rx="1" fill="#f7f8fa" stroke="#323844" stroke-width="1.4"/><rect x="24.3" y="514.3" width="10.6" height="10.2" fill="#3f70ae" stroke="#234a82" stroke-width="1"/><rect x="36.3" y="514" width="2.9" height="10.8" fill="#a9adb6"/><path d="M24.8 529.5H38.4M24.8 535.4H38.4" stroke="#4a505c" stroke-width="1.1"/><rect x="27" y="527.2" width="1.8" height="4.8" fill="#596070"/><rect x="34.6" y="533" width="1.8" height="4.8" fill="#596070"/></svg><div class="a" style="left:0;top:0;width:41px;height:41px;border:1px solid #0a0a0a;background:linear-gradient(#dedede,#c4c4c4 45%,#a0a0a0 80%,#999)"></div>
<div class="a" style="left:1px;top:1px;width:39px;height:39px;border-top:1px solid #f2f2f2;border-left:1px solid #e4e4e4"></div>
<div class="t" style="left:12.6px;top:30.2px;font-size:8.1px;line-height:9px;color:#0c0c0c;letter-spacing:-.1px;-webkit-text-stroke:.25px #0c0c0c">MAX</div>
<div class="a" style="left:214px;top:1px;width:130px;height:21px;border:1px solid #6c6c6c;border-top-color:#8a8a8a;background:linear-gradient(#f0f0f0,#dcdcdc 40%,#c4c4c4 65%,#b2b2b2)"></div>
<div class="t" aria-label="&#24037;&#20316;&#21306;: &#40664;&#35748;" style="left:219.5px;top:4.2px;height:14px;line-height:14px;font-size:12px;color:#000;letter-spacing:.05px">工作区: 默认</div>
<div class="a" style="left:344px;top:1px;width:17px;height:22px;background:linear-gradient(#a8a8a8,#8e8e8e);border-right:1px solid #5a5a5a"></div><svg class="a" style="left:0;top:0" width="362" height="42"><use href="#logo3"/><path d="M30.8 18.1H38L34.4 22.2Z" fill="#2b303a"/><g transform="translate(40.75 -20.6) scale(.522)"><path d="M19.6 52H40.3L47.3 59V73Q47.3 74.1 46.2 74.1H19.6Q18.6 74.1 18.6 73V53Q18.6 52 19.6 52Z" fill="url(#gpage)" stroke="#2e323a" stroke-width="2.02" stroke-linejoin="round"/><path d="M19.9 72.8V53.3H39.6" stroke="#fff" stroke-opacity=".85" fill="none"/><path d="M40.3 52V58.4Q40.3 59 40.9 59H47.3Z" fill="#f4f5f7" stroke="#3a3f48" stroke-width="1.86" stroke-linejoin="round"/></g><g transform="translate(64.5 -70.2) scale(.522)"><path d="M19.5 146.5H28.6L30.2 148.3H39.4Q40.4 148.3 40.4 149.3V164.8H19.5Q18.6 164.8 18.6 163.8V147.5Q18.6 146.5 19.5 146.5Z" fill="url(#gpage)" stroke="#2e323a" stroke-width="2.02" stroke-linejoin="round"/><path d="M19.9 163V147.8H28.1L29.7 149.6H39" stroke="#fff" stroke-opacity=".9" fill="none"/><path d="M19.6 164.9L26.3 157.4H32.9L34.4 155.4H47.4L38.6 164.9Z" fill="url(#gflap)" stroke="#2e323a" stroke-width="2.02" stroke-linejoin="round"/><path d="M21.6 163.9L26.9 158.6H33.5L35 156.6H45.4" stroke="#d4d8de" stroke-opacity=".7" stroke-width="1.40" fill="none"/></g><g transform="translate(88 -100.8) scale(.555)"><path d="M21.2 189.2H44.0Q44.8 189.2 44.8 190.0V212.39999999999998Q44.8 213.2 44.0 213.2H23.4L20.4 210.39999999999998V190.0Q20.4 189.2 21.2 189.2Z" fill="url(#gfl)" stroke="#2b2f37" stroke-width="1.80" stroke-linejoin="round"/><path d="M21.299999999999997 190.5H23.9M41.400000000000006 190.5H43.9" stroke="#9a9fa8" stroke-width="1.35"/><rect x="24.9" y="190.1" width="15.300000000000004" height="11.000000000000005" fill="url(#gpage)" stroke="#2b2f37" stroke-width="1.65"/><path d="M25.799999999999997 200.2V191.1H39.300000000000004" stroke="#fff" stroke-width="1.20" fill="none"/><rect x="26.9" y="205.9" width="11.0" height="6.899999999999983" fill="#f4f5f7" stroke="#2b2f37" stroke-width="1.50"/><rect x="28.3" y="207.5" width="2.5" height="4.099999999999994" fill="#3d424b"/></g><path transform="translate(122 5)" d="M0 5.7L6.6 0V3.3H9.6C13.4 3.3 15.4 5.6 15.4 8.6V11.4H11.6V9.2C11.6 7.9 10.9 7.4 9.6 7.4H6.6V11Z" fill="#f2f2f2" stroke="#2e2e2e" stroke-width="1.1" stroke-linejoin="round"/><path transform="translate(173.2 5) scale(-1 1)" d="M0 5.7L6.6 0V3.3H9.6C13.4 3.3 15.4 5.6 15.4 8.6V11.4H11.6V9.2C11.6 7.9 10.9 7.4 9.6 7.4H6.6V11Z" fill="#f2f2f2" stroke="#2e2e2e" stroke-width="1.1" stroke-linejoin="round"/><path d="M145.2 10H150.2L147.7 12.8Z" fill="#555"/><path d="M180.9 10H185.9L183.4 12.8Z" fill="#555"/><path d="M194.6 5H200L201 6.4H207.6V16.4H194.6Z" fill="#e4e6ea" stroke="#3a3e46" stroke-width="1.1" stroke-linejoin="round"/><path d="M194.6 8.2H207.6" stroke="#8a8e96" stroke-width=".8"/><rect x="203.2" y="10.4" width="6.6" height="8.6" rx=".6" fill="#fafafa" stroke="#2e323a" stroke-width="1"/><rect x="204.3" y="11.6" width="4.4" height="1.8" fill="#2b7ce0"/><path d="M204.4 16H208M206.6 14.7L208 16L206.6 17.3" stroke="#2b60b0" stroke-width=".8" fill="none"/><path d="M334.2 9.6H338.8L336.5 12Z" fill="#333"/><path d="M348 8.2H357" stroke="#333" stroke-width="1.3"/><path d="M348 10.4H357L352.5 14.6Z" fill="#333"/></svg><svg class="a" style="left:0;top:0" width="702" height="815"><path d="M26.5 31.1L43.6 27.3L42.2 30.7L145.6 63.5L40.6 39L39.8 42.6Z" fill="#f93535"/><path d="M91.6 352.4L109.5 355.6L105.9 358.9L207.2 447.7L100.9 363.9L98.9 368.3Z" fill="#f93535"/></svg>
</div>
</body></html>
